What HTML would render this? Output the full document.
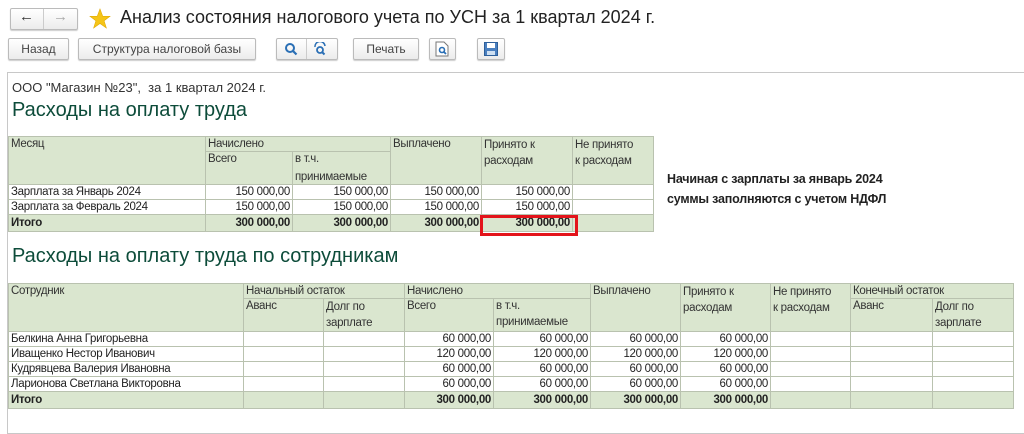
<!DOCTYPE html>
<html><head><meta charset="utf-8"><style>
body{margin:0;width:1024px;height:415px;background:#fff;font-family:"Liberation Sans",Arial,sans-serif;position:relative;overflow:hidden;color:#333}
.a{position:absolute}
.btn{position:absolute;height:22px;border:1px solid #bbb;border-radius:2px;background:linear-gradient(#fff,#ececec);box-sizing:border-box;font-size:12px;color:#444;text-align:center;line-height:20px;box-shadow:0 1px 1px #ccc}
table{position:absolute;border-collapse:collapse;table-layout:fixed;font-size:11.5px;letter-spacing:-0.3px}
td{border:1px solid #b9c2af;padding:0 2px;height:14px;line-height:14px;vertical-align:top;white-space:nowrap;overflow:hidden;color:#222}
.h td{background:#dae6cf;color:#333}
.h td.m{line-height:16px}
.t td{background:#dae6cf;font-weight:bold;height:16px;line-height:16px}
.r{text-align:right}
.h2{font-size:20px;color:#0d4c3a}
</style></head><body>
<div class="btn" style="left:10px;top:8px;width:68px"></div>
<div class="a" style="left:43px;top:9px;width:1px;height:20px;background:#ccc"></div>
<div class="a" style="left:19px;top:8px;font-size:15px;color:#333">&#8592;</div>
<div class="a" style="left:53px;top:8px;font-size:15px;color:#aaa">&#8594;</div>
<svg class="a" style="left:89px;top:8px" width="22" height="21" viewBox="0 0 24 23"><polygon points="12,1 15,9 23,9 16.5,14 19,22 12,17 5,22 7.5,14 1,9 9,9" fill="#f5c518" stroke="#e0a800" stroke-width="0.6"/></svg>
<div class="a" style="left:120px;top:7px;font-size:18px;color:#222">Анализ состояния налогового учета по УСН за 1 квартал 2024 г.</div>

<div class="btn" style="left:8px;top:38px;width:61px">Назад</div>
<div class="btn" style="left:78px;top:38px;width:178px">Структура налоговой базы</div>
<div class="btn" style="left:276px;top:38px;width:62px"></div>
<div class="a" style="left:306px;top:39px;width:1px;height:20px;background:#ccc"></div>
<svg class="a" style="left:284px;top:42px" width="14" height="14" viewBox="0 0 14 14"><circle cx="6" cy="6" r="4" fill="none" stroke="#2a6fb5" stroke-width="2"/><line x1="9" y1="9" x2="12.5" y2="12.5" stroke="#2a6fb5" stroke-width="2.2"/></svg>
<svg class="a" style="left:313px;top:42px" width="15" height="14" viewBox="0 0 15 14"><path d="M2 5 A5 5 0 0 1 12 4" fill="none" stroke="#2a6fb5" stroke-width="1.5"/><circle cx="7" cy="8" r="3" fill="none" stroke="#2a6fb5" stroke-width="1.8"/><line x1="9" y1="10" x2="11.5" y2="12.5" stroke="#2a6fb5" stroke-width="2"/></svg>
<div class="btn" style="left:353px;top:38px;width:66px">Печать</div>
<div class="btn" style="left:429px;top:38px;width:27px"></div>
<svg class="a" style="left:435px;top:41px" width="14" height="16" viewBox="0 0 14 16"><path d="M1 1h8l4 4v10H1z" fill="#fff" stroke="#777"/><circle cx="7" cy="9" r="2.5" fill="none" stroke="#2a6fb5" stroke-width="1.6"/><line x1="8.5" y1="10.5" x2="11" y2="13" stroke="#2a6fb5" stroke-width="1.8"/></svg>
<div class="btn" style="left:477px;top:38px;width:28px"></div>
<svg class="a" style="left:484px;top:42px" width="14" height="14" viewBox="0 0 14 14"><rect x="0.5" y="0.5" width="13" height="13" fill="#4a7fbf" stroke="#2d5f9a"/><rect x="3" y="1" width="8" height="5" fill="#fff"/><rect x="3" y="9" width="8" height="4" fill="#cfe0f2"/></svg>

<div class="a" style="left:7px;top:72px;width:1030px;height:360px;border:1px solid #c8c8c8"></div>
<div class="a" style="left:12px;top:80px;font-size:13px;color:#333">ООО "Магазин №23",&nbsp; за 1 квартал 2024 г.</div>
<div class="a h2" style="left:12px;top:99px">Расходы на оплату труда</div>

<table style="left:8px;top:136px;width:645px">
<colgroup><col style="width:197px"><col style="width:87px"><col style="width:98px"><col style="width:91px"><col style="width:91px"><col style="width:81px"></colgroup>
<tr class="h"><td rowspan="3" style="height:47px">Месяц</td><td colspan="2">Начислено</td><td rowspan="3">Выплачено</td><td rowspan="3" class="m">Принято к<br>расходам</td><td rowspan="3" class="m">Не принято<br>к расходам</td></tr>
<tr class="h"><td rowspan="2">Всего</td><td style="border-bottom:none">в т.ч.</td></tr>
<tr class="h"><td style="border-top:none">принимаемые</td></tr>
<tr><td>Зарплата за Январь 2024</td><td class="r">150 000,00</td><td class="r">150 000,00</td><td class="r">150 000,00</td><td class="r">150 000,00</td><td></td></tr>
<tr><td>Зарплата за Февраль 2024</td><td class="r">150 000,00</td><td class="r">150 000,00</td><td class="r">150 000,00</td><td class="r">150 000,00</td><td></td></tr>
<tr class="t"><td>Итого</td><td class="r">300 000,00</td><td class="r">300 000,00</td><td class="r">300 000,00</td><td class="r">300 000,00</td><td></td></tr>
</table>
<div class="a" style="left:480px;top:215px;width:92px;height:15px;border:3px solid #e3141b"></div>

<div class="a" style="left:667px;top:169px;font-size:12.5px;line-height:20px;color:#222;font-weight:bold;letter-spacing:-0.2px">Начиная с зарплаты за январь 2024<br>суммы заполняются с учетом НДФЛ</div>

<div class="a h2" style="left:12px;top:245px">Расходы на оплату труда по сотрудникам</div>

<table style="left:8px;top:283px;width:1005px">
<colgroup><col style="width:235px"><col style="width:80px"><col style="width:81px"><col style="width:89px"><col style="width:97px"><col style="width:90px"><col style="width:90px"><col style="width:80px"><col style="width:82px"><col style="width:81px"></colgroup>
<tr class="h"><td rowspan="3" style="height:47px">Сотрудник</td><td colspan="2">Начальный остаток</td><td colspan="2">Начислено</td><td rowspan="3">Выплачено</td><td rowspan="3" class="m">Принято к<br>расходам</td><td rowspan="3" class="m">Не принято<br>к расходам</td><td colspan="2">Конечный остаток</td></tr>
<tr class="h"><td rowspan="2">Аванс</td><td rowspan="2" class="m">Долг по<br>зарплате</td><td rowspan="2">Всего</td><td style="border-bottom:none">в т.ч.</td><td rowspan="2">Аванс</td><td rowspan="2" class="m">Долг по<br>зарплате</td></tr>
<tr class="h"><td style="border-top:none">принимаемые</td></tr>
<tr><td>Белкина Анна Григорьевна</td><td></td><td></td><td class="r">60 000,00</td><td class="r">60 000,00</td><td class="r">60 000,00</td><td class="r">60 000,00</td><td></td><td></td><td></td></tr>
<tr><td>Иващенко Нестор Иванович</td><td></td><td></td><td class="r">120 000,00</td><td class="r">120 000,00</td><td class="r">120 000,00</td><td class="r">120 000,00</td><td></td><td></td><td></td></tr>
<tr><td>Кудрявцева Валерия Ивановна</td><td></td><td></td><td class="r">60 000,00</td><td class="r">60 000,00</td><td class="r">60 000,00</td><td class="r">60 000,00</td><td></td><td></td><td></td></tr>
<tr><td>Ларионова Светлана Викторовна</td><td></td><td></td><td class="r">60 000,00</td><td class="r">60 000,00</td><td class="r">60 000,00</td><td class="r">60 000,00</td><td></td><td></td><td></td></tr>
<tr class="t"><td>Итого</td><td></td><td></td><td class="r">300 000,00</td><td class="r">300 000,00</td><td class="r">300 000,00</td><td class="r">300 000,00</td><td></td><td></td><td></td></tr>
</table>
</body></html>
